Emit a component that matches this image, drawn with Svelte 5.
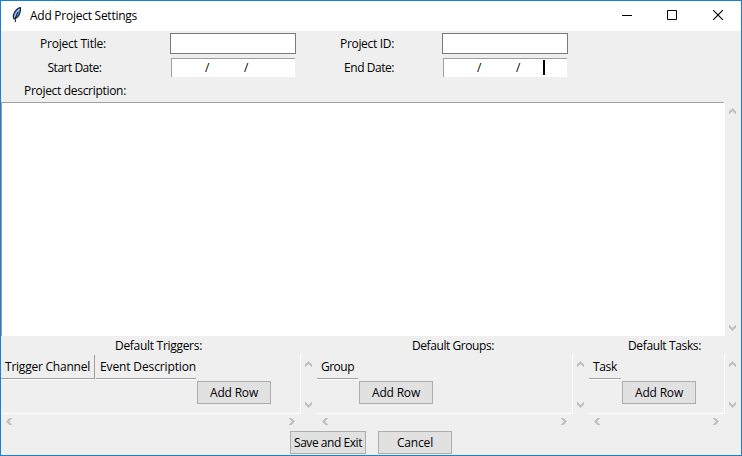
<script>
  const panels = [
    {
      title: 'Default Triggers:', titleWidth: 87, titleLeft: 114, width: 300, gap: 16,
      columns: [
        { name: 'Trigger Channel', width: 94, text: 85, divided: true },
        { name: 'Event Description', width: 100, text: 96 }
      ]
    },
    {
      title: 'Default Groups:', titleWidth: 82, titleLeft: 95, width: 256, gap: 16,
      columns: [{ name: 'Group', width: 41, text: 33 }]
    },
    {
      title: 'Default Tasks:', titleWidth: 73, titleLeft: 39, width: 136, gap: 16,
      columns: [{ name: 'Task', width: 32, text: 24 }]
    }
  ];

  // Tighten the tracking so that a caption fills its given width.
  function fit(node, width) {
    const natural = node.getBoundingClientRect().width;
    node.style.letterSpacing = `${(width - natural) / node.textContent.length}px`;
  }
</script>

{#snippet caption(text, width)}
  <span class="caption" use:fit={width}>{text}</span>
{/snippet}

{#snippet arrow(direction)}
  <svg class="arrow {direction}" width="9" height="9" viewBox="0 0 9 9">
    <path d="M1 4.5 4.5 1 8 4.5V7H7.5L4.5 4 1.5 7H1Z" fill="#bfbfbf" />
  </svg>
{/snippet}

<div class="window">
  <header>
    <svg class="feather" width="12" height="18" viewBox="0 0 12 18">
      <path d="M9.4.6C6.4 1 3.2 4.5 2.4 8c-.4 1.8-.2 3 .6 4 3-.8 5.4-3.6 6.1-6.8C9.5 3.6 9.7 2 9.4.6Z" fill="#4a8ad0" stroke="#17202c" stroke-width="1.1" />
      <path d="M8.3 2C5.8 4.5 4.3 7.5 3.7 10.5" fill="none" stroke="#a9d0f5" stroke-width="1.1" />
      <path d="M6.9 5C5 8.5 4.1 11.5 4.3 15.2" fill="none" stroke="#111" stroke-width="1" />
    </svg>
    <h1>{@render caption('Add Project Settings', 107)}</h1>
    <div class="controls">
      <svg width="10" height="10" viewBox="0 0 10 10"><path d="M0 5.5h10" stroke="#000" /></svg>
      <svg width="10" height="10" viewBox="0 0 10 10"><path d="M.5.5h9v9h-9z" fill="none" stroke="#000" /></svg>
      <svg width="10" height="10" viewBox="0 0 10 10"><path d="m0 0 10 10M10 0 0 10" stroke="#000" stroke-width="1.1" /></svg>
    </div>
  </header>

  <div class="row titles">
    <div class="label first">{@render caption('Project Title:', 66)}</div>
    <div class="entry"></div>
    <div class="label second">{@render caption('Project ID:', 54)}</div>
    <div class="entry"></div>
  </div>
  <div class="row dates">
    <div class="label first">{@render caption('Start Date:', 54)}</div>
    <div class="date"><span>/</span><span>/</span></div>
    <div class="label second">{@render caption('End Date:', 50)}</div>
    <div class="date"><span>/</span><span>/</span><i></i></div>
  </div>
  <div class="row heading">{@render caption('Project description:', 102)}</div>

  <div class="description">
    <div class="textarea"></div>
    <div class="vertical">{@render arrow('up')}{@render arrow('down')}</div>
  </div>

  <div class="panels">
    {#each panels as panel}
      <section style:width="{panel.width + panel.gap}px">
        <div class="panel-title" style:padding-left="{panel.titleLeft}px">
          {@render caption(panel.title, panel.titleWidth)}
        </div>
        <div class="panel-body">
          <div class="frame" style:width="{panel.width}px">
            <div class="columns">
              {#each panel.columns as column}
                <div class="column" class:divided={column.divided} style:width="{column.width}px">
                  {@render caption(column.name, column.text)}
                </div>
              {/each}
            </div>
            <button>{@render caption('Add Row', 48)}</button>
          </div>
          <div class="vertical">{@render arrow('up')}{@render arrow('down')}</div>
        </div>
        <div class="horizontal" style:width="{panel.width}px">
          {@render arrow('left')}{@render arrow('right')}
        </div>
      </section>
    {/each}
  </div>

  <footer>
    <button class="save">{@render caption('Save and Exit', 68)}</button>
    <button>{@render caption('Cancel', 36)}</button>
  </footer>
</div>

<style>
  .window {
    box-sizing: border-box;
    width: 742px;
    height: 456px;
    border: 1px solid #1a80d5;
    background: #efefef;
    color: #000;
    font: 12px/16px 'Open Sans', 'Noto Sans', sans-serif;
    overflow: hidden;
  }
  .caption { display: inline-block; white-space: nowrap; }
  header { display: flex; height: 30px; background: #fff; }
  .feather { margin: 6px 7px 0 10px; }
  h1 { margin: 7px 0 0; font-size: 12px; font-weight: 400; line-height: 16px; }
  .controls { display: flex; gap: 35px; margin: 9px 19px 0 auto; }
  .controls svg { display: block; }
  .controls svg:last-child { margin-left: 1px; margin-right: -1px; }
  .row { display: flex; box-sizing: border-box; }
  .titles { height: 25px; padding-top: 2px; }
  .dates { height: 24px; padding-top: 2px; }
  .heading { height: 22px; padding: 3px 0 0 23px; }
  .label { box-sizing: border-box; flex: none; text-align: center; padding-top: 3px; }
  .first { width: 144px; margin-right: 25px; }
  .second { width: 142px; margin-right: 4px; }
  .dates .label { padding-top: 2px; }
  .dates .first { width: 147px; margin-right: 22px; }
  .dates .second { width: 146px; margin-right: 0; }
  .entry { box-sizing: border-box; width: 126px; height: 21px; border: 1px solid #7a7a7a; background: #fff; }
  .date {
    display: flex;
    box-sizing: border-box;
    width: 124px;
    height: 19px;
    margin: 0 1px;
    padding: 1px 0 0 33px;
    border-top: 1px solid #a0a0a0;
    border-left: 1px solid #a0a0a0;
    background: #fff;
  }
  .date span { width: 39px; }
  .date i { width: 2px; height: 15px; margin-left: -12px; background: #000; }
  .description { display: flex; height: 234px; }
  .textarea {
    box-sizing: border-box;
    width: 724px;
    border-top: 1px solid #a0a0a0;
    border-left: 1px solid #a0a0a0;
    border-right: 2px solid #fff;
    background: #fff;
  }
  .vertical {
    display: flex;
    flex-direction: column;
    justify-content: space-between;
    align-items: center;
    box-sizing: border-box;
    width: 16px;
    padding: 5px 1px 5px 0;
  }
  .description .vertical { padding-bottom: 4px; }
  .arrow { display: block; flex: none; }
  .down { transform: rotate(180deg); }
  .left { transform: rotate(-90deg); }
  .right { transform: rotate(90deg); }
  .panels { display: flex; height: 94px; }
  section { flex: none; }
  .panel-title { box-sizing: border-box; height: 19px; padding-top: 2px; }
  .panel-body { display: flex; height: 59px; }
  .frame {
    box-sizing: border-box;
    display: flex;
    border-right: 1px solid #fff;
    border-bottom: 1px solid #fff;
  }
  .columns { display: flex; gap: 1px; height: 25px; }
  .column {
    box-sizing: border-box;
    height: 25px;
    padding: 4px 0 0 4px;
    border-bottom: 1px solid #fff;
    box-shadow: inset 0 -1px #a0a0a0;
  }
  .divided { border-right: 1px solid #a0a0a0; }
  button {
    display: flex;
    justify-content: center;
    align-items: center;
    box-sizing: border-box;
    flex: none;
    width: 74px;
    height: 23px;
    padding: 1px 0 0;
    border: 1px solid #adadad;
    border-radius: 0;
    background: #e1e1e1;
    color: inherit;
    font: inherit;
  }
  .frame button { margin: 26px 0 0 1px; }
  .horizontal {
    display: flex;
    justify-content: space-between;
    align-items: center;
    box-sizing: border-box;
    height: 15px;
    padding: 0 5px 0 4px;
  }
  footer { display: flex; gap: 12px; padding: 1px 0 0 289px; }
  .save { width: 76px; }
</style>
